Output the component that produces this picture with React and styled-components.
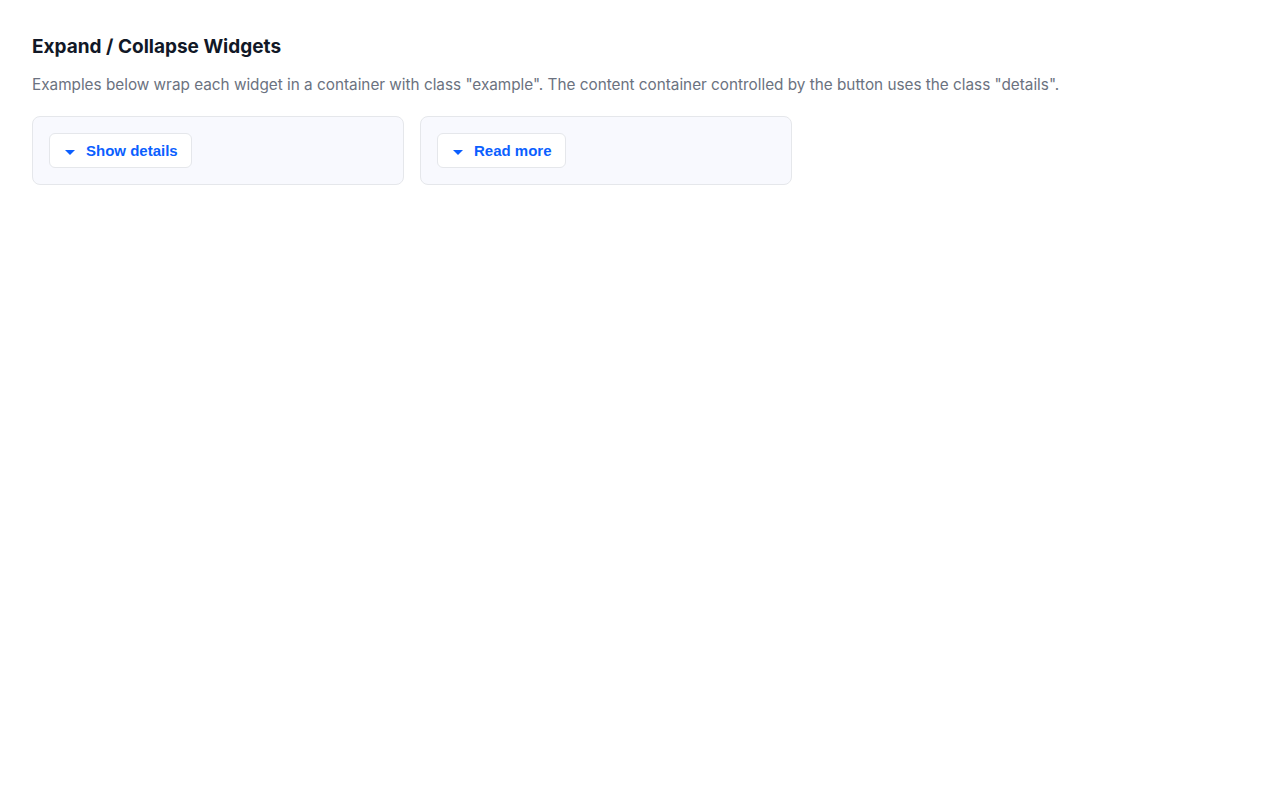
import React, { useState } from "react";
import styled, { createGlobalStyle } from "styled-components";

const GlobalStyle = createGlobalStyle`
  * { box-sizing: border-box; }
  html, body { margin: 0; background: #ffffff; }
  body {
    font-family: Inter, "Liberation Sans", Arial, sans-serif;
    color: #111827;
  }
`;

const Page = styled.main`
  padding: 33px 32px 32px;
`;

const Title = styled.h2`
  margin: 0 0 13px;
  font-size: 19px;
  line-height: 28px;
  font-weight: 700;
  color: #111827;
`;

const Lead = styled.p`
  margin: 0 0 20px;
  font-size: 15.3px;
  line-height: 22px;
  color: #6b7280;
`;

const Grid = styled.div`
  display: grid;
  grid-template-columns: repeat(2, 372px);
  gap: 16px;
  align-items: start;
`;

const Example = styled.div`
  background: #f8f9fe;
  border: 1px solid #e5e7eb;
  border-radius: 8px;
  padding: 16px;
`;

const Toggle = styled.button`
  display: inline-flex;
  align-items: center;
  gap: 11px;
  height: 35px;
  padding: 0 13px 0 15px;
  background: #ffffff;
  border: 1px solid #e5e7eb;
  border-radius: 6px;
  font-family: "Liberation Sans", Arial, sans-serif;
  font-size: 15px;
  font-weight: 700;
  color: #0b5fff;
  cursor: pointer;
`;

const Caret = styled.span`
  display: inline-block;
  width: 0;
  height: 0;
  margin-top: 3px;
  border-left: 5px solid transparent;
  border-right: 5px solid transparent;
  border-top: 5px solid #0b5fff;
  transform: ${(p) => (p.$open ? "rotate(180deg)" : "none")};
`;

const Details = styled.div`
  margin-top: 12px;
  font-size: 14px;
  line-height: 20px;
  color: #374151;
`;

const Widget = ({ label, children }) => {
  const [open, setOpen] = useState(false);
  return (
    <Example className="example">
      <Toggle aria-expanded={open} onClick={() => setOpen(!open)}>
        <Caret $open={open} />
        {label}
      </Toggle>
      {open && <Details className="details">{children}</Details>}
    </Example>
  );
};

export default function App() {
  return (
    <>
      <GlobalStyle />
      <Page>
        <Title>Expand / Collapse Widgets</Title>
        <Lead>
          Examples below wrap each widget in a container with class "example". The content
          container controlled by the button uses the class "details".
        </Lead>
        <Grid>
          <Widget label="Show details">Here are the details.</Widget>
          <Widget label="Read more">More content goes here.</Widget>
        </Grid>
      </Page>
    </>
  );
}
